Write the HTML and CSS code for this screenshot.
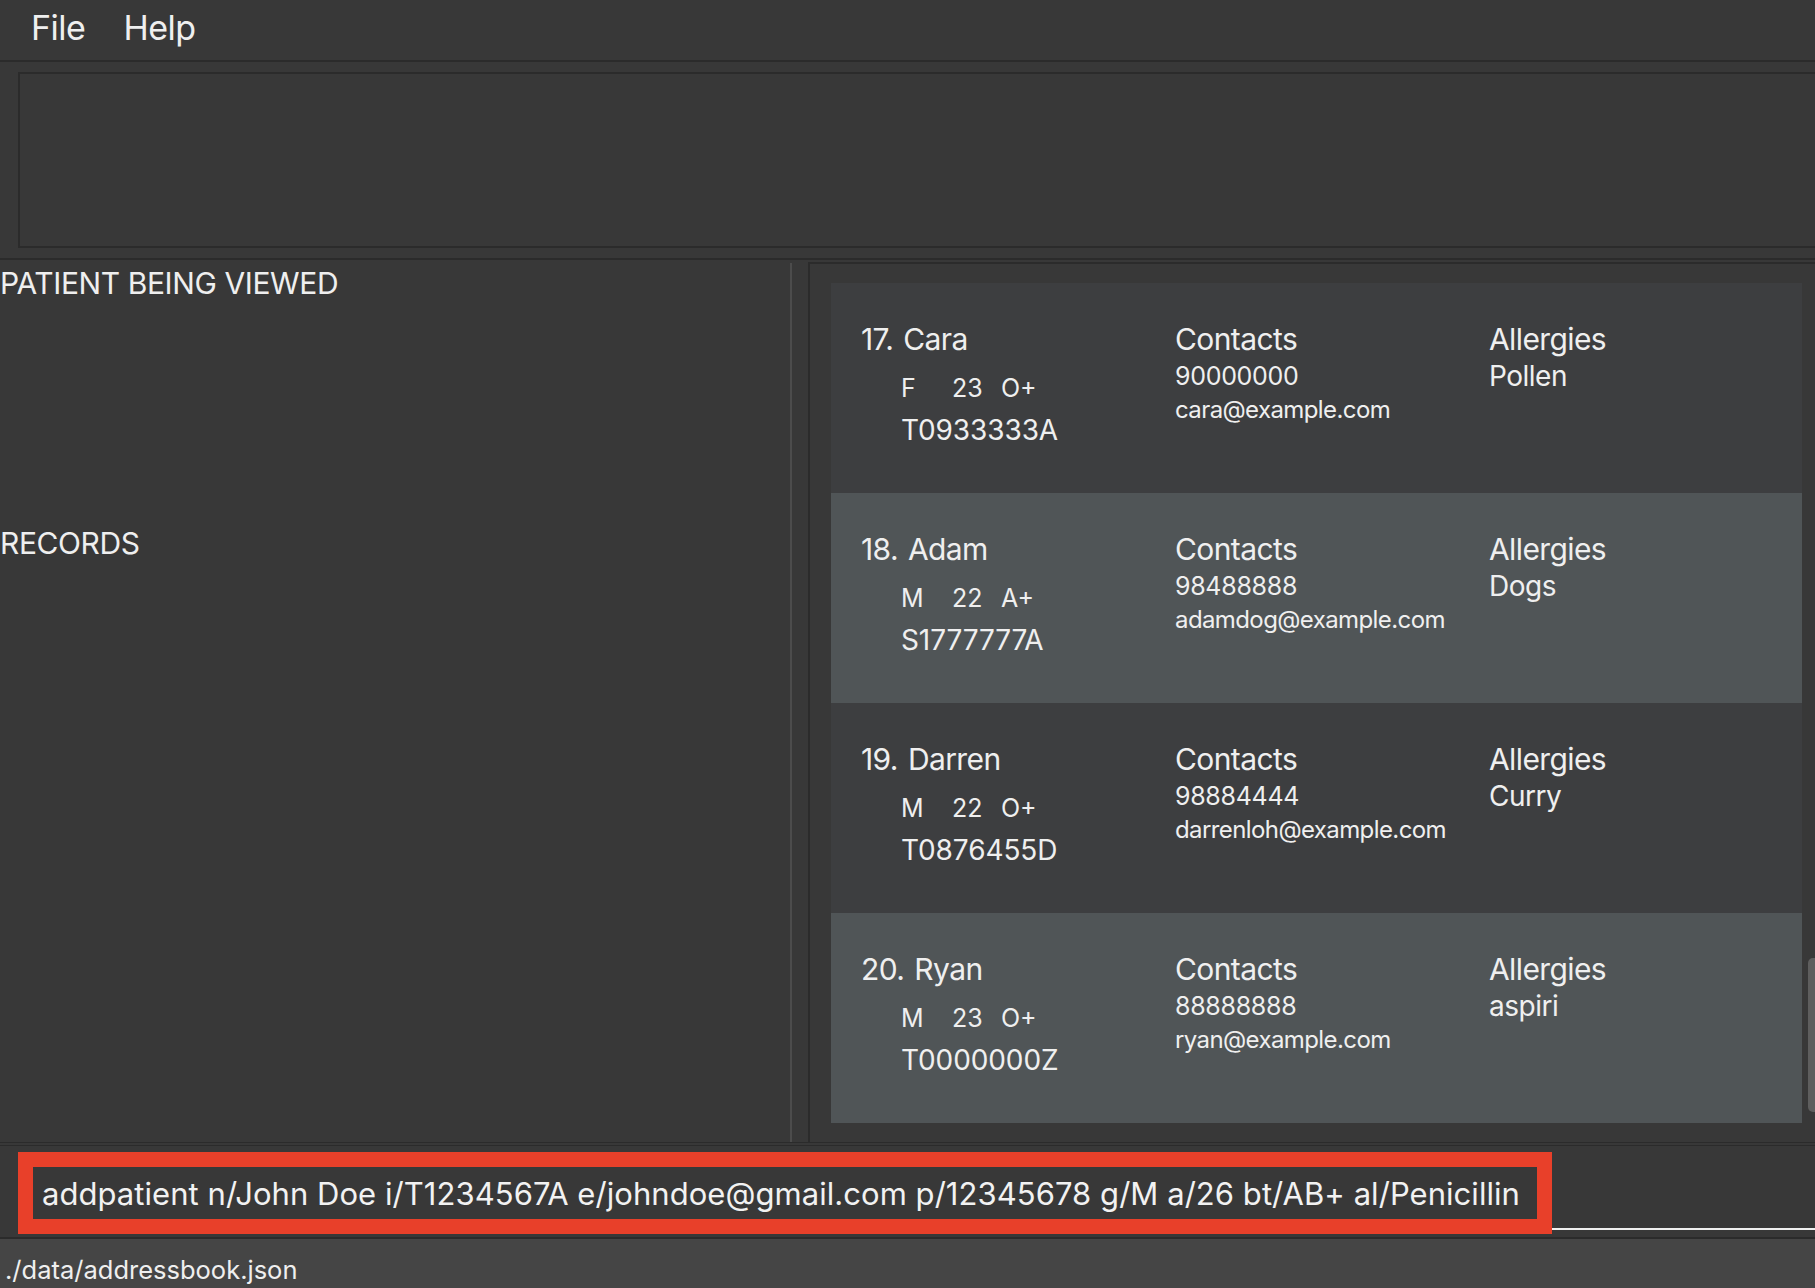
FILE: index.html
```html
<!DOCTYPE html>
<html lang="en">
<head>
<meta charset="utf-8">
<title>Clinic</title>
<link rel="stylesheet" href="styles.css">
</head>
<body>
<div class="app">
  <div class="menubar">
    <span class="menu-item menu-file">File</span>
    <span class="menu-item menu-help">Help</span>
  </div>
  <div class="result-area">
    <div class="result-box"></div>
  </div>
  <div class="main">
    <div class="left-panel">
      <div class="section-label">PATIENT BEING VIEWED</div>
      <div class="section-label records-label">RECORDS</div>
    </div>
    <div class="divider"></div>
    <div class="list-view">
      <div class="cards">
        <div class="card card-odd">
          <div class="col col-id">
            <div class="name"><span class="idx">17.</span><span>Cara</span></div>
            <div class="meta"><span class="sex">F</span><span class="age">23</span><span class="blood">O+</span></div>
            <div class="nric">T0933333A</div>
          </div>
          <div class="col">
            <div class="heading">Contacts</div>
            <div class="phone">90000000</div>
            <div class="email">cara@example.com</div>
          </div>
          <div class="col">
            <div class="heading">Allergies</div>
            <div class="allergy">Pollen</div>
          </div>
        </div>
        <div class="card card-even">
          <div class="col col-id">
            <div class="name"><span class="idx">18.</span><span>Adam</span></div>
            <div class="meta"><span class="sex">M</span><span class="age">22</span><span class="blood">A+</span></div>
            <div class="nric">S1777777A</div>
          </div>
          <div class="col">
            <div class="heading">Contacts</div>
            <div class="phone">98488888</div>
            <div class="email">adamdog@example.com</div>
          </div>
          <div class="col">
            <div class="heading">Allergies</div>
            <div class="allergy">Dogs</div>
          </div>
        </div>
        <div class="card card-odd">
          <div class="col col-id">
            <div class="name"><span class="idx">19.</span><span>Darren</span></div>
            <div class="meta"><span class="sex">M</span><span class="age">22</span><span class="blood">O+</span></div>
            <div class="nric">T0876455D</div>
          </div>
          <div class="col">
            <div class="heading">Contacts</div>
            <div class="phone">98884444</div>
            <div class="email">darrenloh@example.com</div>
          </div>
          <div class="col">
            <div class="heading">Allergies</div>
            <div class="allergy">Curry</div>
          </div>
        </div>
        <div class="card card-even">
          <div class="col col-id">
            <div class="name"><span class="idx">20.</span><span>Ryan</span></div>
            <div class="meta"><span class="sex">M</span><span class="age">23</span><span class="blood">O+</span></div>
            <div class="nric">T0000000Z</div>
          </div>
          <div class="col">
            <div class="heading">Contacts</div>
            <div class="phone">88888888</div>
            <div class="email">ryan@example.com</div>
          </div>
          <div class="col">
            <div class="heading">Allergies</div>
            <div class="allergy">aspiri</div>
          </div>
        </div>
      </div>
      <div class="scrollbar"><div class="thumb"></div></div>
    </div>
  </div>
  <div class="bottom-lines"></div>
  <div class="command-area">
    <div class="command-box">
      <div class="command-text">addpatient n/John Doe i/T1234567A e/johndoe@gmail.com p/12345678 g/M a/26 bt/AB+ al/Penicillin</div>
    </div>
    <div class="command-rest"></div>
  </div>
  <div class="status-bar">./data/addressbook.json</div>
</div>
</body>
</html>
```
FILE: styles.css
```css
* { box-sizing: border-box; }

html, body {
  margin: 0;
  padding: 0;
  background: #383838;
}

body {
  width: 1815px;
  height: 1288px;
  overflow: hidden;
  font-family: Inter, "Noto Sans", "Liberation Sans", sans-serif;
  color: #efefef;
}

.app {
  display: flex;
  flex-direction: column;
  width: 1815px;
  height: 1288px;
}

/* menu */
.menubar {
  height: 62px;
  border-bottom: 2px solid #2b2b2b;
  display: flex;
  align-items: flex-start;
  padding-top: 3px;
  flex: none;
}
.menu-item {
  font-size: 34px;
  letter-spacing: -0.5px;
  line-height: 50px;
}
.menu-file { margin-left: 31px; }
.menu-help { margin-left: 38px; }

/* result display */
.result-area {
  height: 198px;
  border-bottom: 2px solid #2b2b2b;
  padding: 10px 0 0 18px;
  overflow: hidden;
  flex: none;
}
.result-box {
  width: 1900px;
  height: 176px;
  border: 2px solid #2b2b2b;
}

/* main split */
.main {
  height: 882px;
  display: flex;
  flex: none;
}
.left-panel {
  width: 790px;
  padding-top: 5px;
  flex: none;
}
.section-label {
  font-size: 30px;
  line-height: 36px;
  letter-spacing: -0.4px;
}
.records-label { margin-top: 224px; }

.divider {
  width: 2px;
  margin-top: 3px;
  background: #4c4c4c;
  flex: none;
}

.list-view {
  margin-left: 16px;
  margin-top: 2px;
  flex: 1;
  display: flex;
  border-left: 2px solid #2b2b2b;
  border-top: 2px solid #2b2b2b;
  padding: 19px 0 0 21px;
}
.cards {
  width: 971px;
  flex: none;
  display: flex;
  flex-direction: column;
}

.card {
  height: 210px;
  display: grid;
  grid-template-columns: 314px 314px 1fr;
  padding: 38px 0 0 30px;
}
.card-odd { background: #3d3e40; }
.card-even { background: #505557; }

.col { display: flex; flex-direction: column; }

.name, .heading {
  font-size: 30px;
  line-height: 36px;
  letter-spacing: -0.6px;
  white-space: nowrap;
}
.idx { margin-right: 10px; }

.meta {
  margin-top: 13px;
  padding-left: 40px;
  font-size: 25px;
  line-height: 36px;
  display: flex;
}
.sex { width: 51px; }
.age { width: 49px; }

.nric {
  margin-top: 6px;
  padding-left: 40px;
  font-size: 28px;
  line-height: 36px;
  letter-spacing: -0.1px;
}

.phone {
  margin-top: 4px;
  font-size: 25px;
  line-height: 30px;
  letter-spacing: -0.3px;
}
.email {
  margin-top: 4px;
  font-size: 24px;
  line-height: 30px;
  letter-spacing: -0.6px;
}
.allergy {
  margin-top: 1px;
  font-size: 28px;
  line-height: 36px;
  letter-spacing: -0.5px;
}

.scrollbar {
  flex: 1;
  padding: 694px 0 0 6px;
  margin-top: -19px;
}
.thumb {
  width: 12px;
  height: 154px;
  background: #5e5e5e;
  border-radius: 5px;
}

/* bottom */
.bottom-lines {
  height: 4px;
  border-top: 1px solid #2b2b2b;
  border-bottom: 1px solid #2b2b2b;
  flex: none;
}

.command-area {
  height: 93px;
  padding: 6px 0 0 18px;
  display: flex;
  align-items: flex-start;
  border-bottom: 2px solid #2b2b2b;
  flex: none;
}
.command-box {
  width: 1534px;
  height: 82px;
  border: 15px solid #e8402a;
  background: #383838;
  padding: 2px 0 0 9px;
  flex: none;
}
.command-text {
  font-size: 31px;
  line-height: 50px;
  letter-spacing: 0.05px;
  white-space: nowrap;
  color: #f2f2f2;
}
.command-rest {
  flex: 1;
  height: 78px;
  border-bottom: 2px solid #f0f0f0;
}

.status-bar {
  flex: 1;
  background: #454545;
  font-size: 25.5px;
  line-height: 43px;
  padding: 9px 0 0 5px;
  letter-spacing: 0;
  white-space: nowrap;
  overflow: hidden;
}
```
